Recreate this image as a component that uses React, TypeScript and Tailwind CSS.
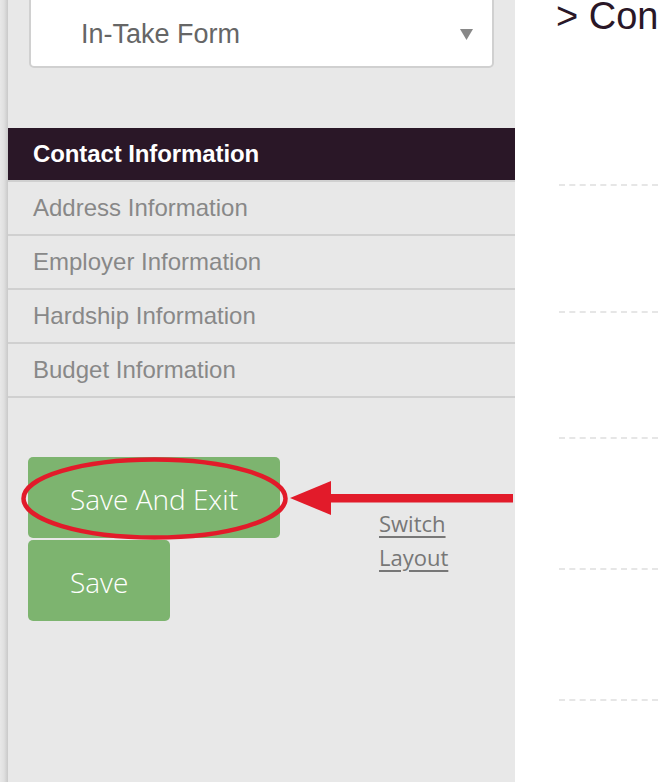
const sections = [
  'Address Information',
  'Employer Information',
  'Hardship Information',
  'Budget Information',
]

const dashedRows = [184, 311, 437, 568, 699]

const App: React.FC = () => {
  return (
    <div className="relative flex h-[782px] w-[658px] overflow-hidden bg-white font-['Liberation_Sans',Arial,sans-serif]">
      {/* left edge shadow */}
      <div className="h-full w-[8px] flex-none bg-gradient-to-r from-[#e8e8e8] via-[#e0e0e0] to-[#c9c9c9]" />

      {/* sidebar */}
      <div className="flex h-full w-[507px] flex-none flex-col bg-[#e8e8e8]">
        <div className="mt-[-10px] ml-[21px] mr-[21px] flex h-[78px] items-center justify-between rounded-[5px] border-2 border-[#d0d0d0] bg-white pl-[50px] pr-[19px]">
          <span className="pt-[10px] text-[27px] text-[#666]">In-Take Form</span>
          <svg className="mt-[10px]" width="13" height="11" viewBox="0 0 13 11">
            <polygon points="0,0 13,0 6.5,11" fill="#888" />
          </svg>
        </div>

        <div className="mt-[60px] flex h-[52px] items-center bg-[#2a1727] pl-[25px] text-[24px] font-bold tracking-[-0.1px] text-white">
          Contact Information
        </div>
        <div className="border-t-2 border-[#d0d0d0]" />
        {sections.map((label) => (
          <div
            key={label}
            className="flex h-[54px] items-center border-b-2 border-[#d0d0d0] pl-[25px] text-[24px] text-[#888]"
          >
            {label}
          </div>
        ))}

        <div className="mt-[59px] flex items-start font-['Open_Sans',sans-serif]">
          <div className="ml-[20px] flex flex-col gap-[2px]">
            <button className="flex h-[81px] w-[252px] items-center rounded-[5px] bg-[#7db46f] pl-[42px] pt-[3px] text-[28px] font-light text-white">
              Save And Exit
            </button>
            <button className="flex h-[81px] w-[142px] items-center rounded-[5px] bg-[#7db46f] pl-[42px] pt-[3px] text-[28px] font-light text-white">
              Save
            </button>
          </div>
          <a className="ml-[99px] mt-[49px] block text-[22px] leading-[34px] text-[#777] underline underline-offset-[4px]">
            Switch
            <br />
            Layout
          </a>
        </div>
      </div>

      {/* main panel */}
      <div className="relative h-full flex-1 overflow-hidden bg-white">
        <div className="ml-[41px] mt-[-8px] whitespace-nowrap text-[38px] leading-[48px] text-[#2a1727]">
          &gt; Contact Information
        </div>
        {dashedRows.map((y) => (
          <div
            key={y}
            className="absolute left-[44px] right-0 border-t-2 border-dashed border-[#e6e6e6]"
            style={{ top: y }}
          />
        ))}
      </div>

      {/* annotation */}
      <svg className="pointer-events-none absolute left-0 top-0" width="658" height="782">
        <ellipse cx="154.5" cy="498.5" rx="131" ry="39" fill="none" stroke="#e21b2a" strokeWidth="4.5" />
        <rect x="328" y="494" width="185" height="8.5" fill="#e21b2a" />
        <polygon points="290,498 331,481 331,515" fill="#e21b2a" />
      </svg>
    </div>
  )
}

export default App
